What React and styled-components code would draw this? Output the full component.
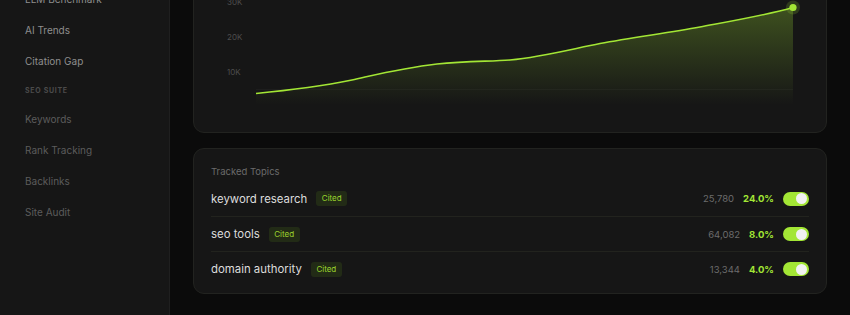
import React from 'react'
import styled, { createGlobalStyle } from 'styled-components'

const GlobalStyle = createGlobalStyle`
  html, body {
    margin: 0;
    padding: 0;
    background: #0b0b0b;
    overflow: hidden;
  }
  body {
    font-family: Inter, "Noto Sans", "Liberation Sans", sans-serif;
    -webkit-font-smoothing: antialiased;
  }
`

const Layout = styled.div`
  display: flex;
  height: 315px;
  overflow: hidden;
`

const Sidebar = styled.aside`
  width: 169px;
  flex-shrink: 0;
  background: #161616;
  border-right: 1px solid #1f1f1f;
  overflow: hidden;
`

const NavList = styled.nav`
  display: flex;
  flex-direction: column;
  margin-top: -16px;
  padding: 0 25px;
`

const NavItem = styled.div`
  height: 31px;
  line-height: 31px;
  font-size: 10px;
  color: ${({ muted }) => (muted ? '#5c5c5c' : '#8e8e8e')};
  white-space: nowrap;
`

const NavSection = styled.div`
  height: 26px;
  line-height: 26px;
  margin-top: 1px;
  font-size: 7px;
  font-weight: 700;
  letter-spacing: 0.7px;
  color: #4b4b4b;
  text-transform: uppercase;
`

const Main = styled.main`
  flex: 1;
  padding: 0 23px;
  overflow: hidden;
`

const Scroller = styled.div`
  margin-top: -30px;
  display: flex;
  flex-direction: column;
  gap: 15px;
`

const Card = styled.section`
  background: #161616;
  border: 1px solid #222320;
  border-radius: 11px;
`

const ChartCard = styled(Card)`
  padding: 14px 25px 27px 33px;
`

const ChartRow = styled.div`
  display: flex;
`

const YAxis = styled.div`
  width: 25px;
  flex-shrink: 0;
  display: flex;
  flex-direction: column;
`

const YLabel = styled.div`
  height: 35px;
  line-height: 35px;
  font-size: 8px;
  color: #4d4d4d;
`

const Plot = styled.svg`
  display: block;
  width: 549px;
  height: 120px;
  overflow: visible;
`

const TopicsCard = styled(Card)`
  padding: 16px 17px 7px;
`

const CardTitle = styled.div`
  font-size: 9.5px;
  line-height: 14px;
  color: #6b6b6b;
  margin-bottom: 2px;
`

const Row = styled.div`
  display: flex;
  align-items: center;
  height: 35px;
  border-top: ${({ first }) => (first ? 'none' : '1px solid #22231e')};
  box-sizing: border-box;
`

const TopicName = styled.span`
  font-size: 11.4px;
  color: #dcdcdc;
`

const Badge = styled.span`
  margin-left: 9px;
  padding: 0 5.5px;
  height: 15px;
  line-height: 15px;
  border-radius: 3px;
  background: #222b16;
  color: #9cd52d;
  font-size: 8px;
`

const Stats = styled.div`
  margin-left: auto;
  display: flex;
  align-items: center;
  gap: 9px;
`

const Count = styled.span`
  font-size: 9.5px;
  color: #6c6c6c;
`

const Percent = styled.span`
  font-size: 9.5px;
  font-weight: 700;
  color: #a3e635;
`

const Toggle = styled.span`
  display: inline-flex;
  align-items: center;
  justify-content: flex-end;
  width: 26px;
  height: 14px;
  padding: 0 2px;
  box-sizing: border-box;
  border-radius: 7px;
  background: ${({ on }) => (on ? '#a3e635' : '#333')};

  &::after {
    content: '';
    width: 11px;
    height: 11px;
    border-radius: 50%;
    background: #f1f1f1;
  }
`

const LINE =
  'M4 108.5 C 40 105, 70 101, 100 95 C 125 89.5, 150 83, 185 79 C 215 76, 238 76.5, 258 75 C 290 72, 320 64, 348 58.5 C 380 52.5, 415 48, 448 42 C 480 36, 515 30, 541 22.5'

const topics = [
  { name: 'keyword research', count: '25,780', pct: '24.0%' },
  { name: 'seo tools', count: '64,082', pct: '8.0%' },
  { name: 'domain authority', count: '13,344', pct: '4.0%' },
]

const nav = [
  { label: 'LLM Benchmark' },
  { label: 'AI Trends' },
  { label: 'Citation Gap' },
  { section: 'SEO Suite' },
  { label: 'Keywords', muted: true },
  { label: 'Rank Tracking', muted: true },
  { label: 'Backlinks', muted: true },
  { label: 'Site Audit', muted: true },
]

export default function App() {
  return (
    <>
      <GlobalStyle />
      <Layout>
        <Sidebar>
          <NavList>
            {nav.map((n, i) =>
              n.section ? (
                <NavSection key={i}>{n.section}</NavSection>
              ) : (
                <NavItem key={i} muted={n.muted}>{n.label}</NavItem>
              )
            )}
          </NavList>
        </Sidebar>
        <Main>
          <Scroller>
            <ChartCard>
              <ChartRow>
                <YAxis>
                  <YLabel>30K</YLabel>
                  <YLabel>20K</YLabel>
                  <YLabel>10K</YLabel>
                </YAxis>
                <Plot viewBox="0 0 549 120">
                  <defs>
                    <linearGradient id="areaFill" x1="0" y1="0" x2="0" y2="1">
                      <stop offset="0%" stopColor="#a3e635" stopOpacity="0.28" />
                      <stop offset="100%" stopColor="#a3e635" stopOpacity="0" />
                    </linearGradient>
                  </defs>
                  <line x1="4" x2="541" y1="104.5" y2="104.5" stroke="#ffffff" strokeOpacity="0.03" />
                  <path d={`${LINE} L541 120 L4 120 Z`} fill="url(#areaFill)" />
                  <path d={LINE} fill="none" stroke="#a3e635" strokeWidth="1.6" />
                  <circle cx="541" cy="22.5" r="7" fill="#a3e635" fillOpacity="0.18" />
                  <circle cx="541" cy="22.5" r="3.6" fill="#a3e635" />
                </Plot>
              </ChartRow>
            </ChartCard>
            <TopicsCard>
              <CardTitle>Tracked Topics</CardTitle>
              {topics.map((t, i) => (
                <Row key={t.name} first={i === 0}>
                  <TopicName>{t.name}</TopicName>
                  <Badge>Cited</Badge>
                  <Stats>
                    <Count>{t.count}</Count>
                    <Percent>{t.pct}</Percent>
                    <Toggle on />
                  </Stats>
                </Row>
              ))}
            </TopicsCard>
          </Scroller>
        </Main>
      </Layout>
    </>
  )
}
